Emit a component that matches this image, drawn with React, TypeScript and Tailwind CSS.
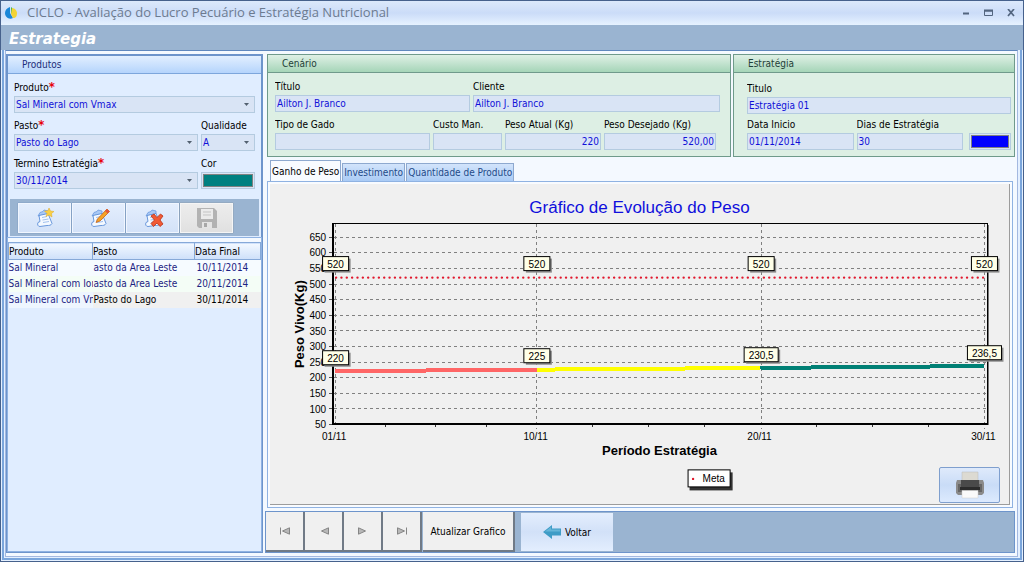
import React, { useState } from 'react';

interface Registro {
  id: number;
  produto: string;
  pasto: string;
  dataFinal: string;
}

interface Ponto {
  dia: number;
  peso: number;
  label: string;
}

const registros: Registro[] = [
  { id: 1, produto: 'Sal Mineral', pasto: 'asto da Area Leste', dataFinal: '10/11/2014' },
  { id: 2, produto: 'Sal Mineral com Ior', pasto: 'asto da Area Leste', dataFinal: '20/11/2014' },
  { id: 3, produto: 'Sal Mineral com Vm', pasto: 'Pasto do Lago', dataFinal: '30/11/2014' },
];

const pontos: Ponto[] = [
  { dia: 1, peso: 220, label: '220' },
  { dia: 10, peso: 225, label: '225' },
  { dia: 20, peso: 230.5, label: '230,5' },
  { dia: 30, peso: 236.5, label: '236,5' },
];

const cores = ['#ff6666', '#ffff00', '#008075'];
const meta = 520;
const abas = ['Ganho de Peso', 'Investimento', 'Quantidade de Produto'];

const inputClass = 'block h-[17px] w-full min-w-0 border border-[#b4cbe0] bg-[#d9e4f5] px-px text-[#1010d8] outline-none';
const headerClass = 'flex h-[18px] items-center border-b px-3.5';

const Campo: React.FC<{ id: string; label: string; value?: string; right?: boolean }> = ({ id, label, value = '', right }) => (
  <div className="min-w-0">
    <label htmlFor={id} className="block h-4 truncate leading-4">{label}</label>
    <input id={id} defaultValue={value} className={`${inputClass} ${right ? 'text-right' : ''}`} />
  </div>
);

const Combo: React.FC<{ id: string; label: string; value: string; required?: boolean }> = ({ id, label, value, required }) => (
  <div className="min-w-0">
    <label htmlFor={id} className="block h-4 whitespace-nowrap leading-4">
      {label}
      {required && <span className="text-[13px] font-bold leading-none text-red-600">*</span>}
    </label>
    <div className="relative">
      <select id={id} className={`${inputClass} appearance-none`}>
        <option>{value}</option>
      </select>
      <svg viewBox="0 0 5 3" className="pointer-events-none absolute right-1.5 top-[7px] h-[3px] w-[5px]">
        <path d="M0 0h5L2.5 3z" fill="#52606f" />
      </svg>
    </div>
  </div>
);

const Cor: React.FC<{ id: string; value: string; label: string }> = ({ id, value, label }) => (
  <input
    id={id}
    type="color"
    aria-label={label}
    defaultValue={value}
    className="block h-[17px] w-full appearance-none border border-[#b4cbe0] bg-[#d9e4f5] p-px [&::-webkit-color-swatch-wrapper]:p-0 [&::-webkit-color-swatch]:rounded-none [&::-webkit-color-swatch]:border-[#808080]"
  />
);

// Folha de papel usada nos botões novo / editar / excluir
const Folha: React.FC<{ children?: React.ReactNode }> = ({ children }) => (
  <svg viewBox="0 0 22 20" className="h-5 w-[22px]">
    <path d="M4 8l2-3.500 3-1 1-1.500 4 1 0 3z" fill="#a9c9f5" stroke="#6c9be0" strokeWidth=".8" />
    <path d="M5 7.500l9-2 4 10c-1 2-3 2-5 2l-7 1c-2 0-3-2-2-4l2-1z" fill="#f4f9ff" stroke="#5c8fd8" strokeWidth=".9" />
    <path d="M8 9.500l5-1M8.500 12l6-1M9 14.500l6-1" stroke="#8db3ea" strokeWidth=".8" />
    {children}
  </svg>
);

const Marca: React.FC<{ x: number; y: number; texto: string }> = ({ x, y, texto }) => {
  const w = texto.length > 3 ? 34 : 26;
  return (
    <g>
      <rect x={x - w / 2 + 2} y={y - 5} width={w} height={14} fill="#8c8c8c" />
      <rect x={x - w / 2} y={y - 7} width={w} height={14} fill="#ffffe8" stroke="#000" />
      <text x={x} y={y + 4} textAnchor="middle">{texto}</text>
    </g>
  );
};

const px = (dia: number) => 65 + (dia - 1) * 22.36;
const py = (peso: number) => 240 - (peso - 50) * 0.312;

const Grafico: React.FC = () => {
  const escala = Array.from({ length: 13 }, (_, i) => 50 + i * 50);
  const dias = [1, 10, 20, 30];
  const ticks = [3.25, 5.5, 7.75, 12.5, 15, 17.5, 22.5, 25, 27.5];

  return (
    <svg viewBox="0 0 738 320" className="block w-full font-['Liberation_Sans',sans-serif] text-[10px]">
      <text x="369" y="29" textAnchor="middle" fontSize="17" fill="#0f0fdc">Gráfico de Evolução do Peso</text>

      <g shapeRendering="crispEdges">
        {escala.map((v) => (
          <g key={v}>
            <line x1="64" x2="715" y1={Math.round(py(v)) + 0.5} y2={Math.round(py(v)) + 0.5} stroke="#808080" strokeDasharray="3 3" />
            <line x1="59" x2="63" y1={Math.round(py(v)) + 0.5} y2={Math.round(py(v)) + 0.5} stroke="#555" />
          </g>
        ))}
        {dias.map((d) => (
          <line key={d} x1={Math.round(px(d)) + 0.5} x2={Math.round(px(d)) + 0.5} y1="40" y2="245" stroke="#808080" strokeDasharray="3 3" />
        ))}
        {ticks.map((d) => (
          <line key={d} x1={px(d)} x2={px(d)} y1="241" y2="243" stroke="#333" />
        ))}
        <path d="M62 39.500H717" stroke="#000" />
        <path d="M63 39V241M62 240H718" stroke="#000" strokeWidth="2" />
        <path d="M716.500 39V241" stroke="#000" />
        <path d="M717.500 41V241" stroke="#777" />
      </g>

      {escala.map((v) => (
        <text key={v} x="56" y={py(v) + 4} textAnchor="end">{v}</text>
      ))}
      {dias.map((d) => (
        <text key={d} x={px(d) - 1} y="256" textAnchor="middle">{`${String(d).padStart(2, '0')}/11`}</text>
      ))}

      <line x1="66" x2="713" y1="93.500" y2="93.500" stroke="#e0182d" strokeWidth="2.400" strokeLinecap="round" strokeDasharray="0 5.340" />
      {cores.map((cor, i) => (
        <line
          key={cor}
          x1={px(pontos[i].dia)}
          y1={py(pontos[i].peso)}
          x2={px(pontos[i + 1].dia)}
          y2={py(pontos[i + 1].peso)}
          stroke={cor}
          strokeWidth="4"
          shapeRendering="crispEdges"
        />
      ))}

      {pontos.map((p) => (
        <g key={p.dia}>
          <Marca x={Math.round(px(p.dia)) + 0.5} y={Math.round(py(meta)) - 13.5} texto="520" />
          <Marca x={Math.round(px(p.dia)) + 0.5} y={Math.round(py(p.peso)) - 13.5} texto={p.label} />
        </g>
      ))}

      <text x="389" y="271" textAnchor="middle" fontSize="13" fontWeight="bold">Período Estratégia</text>
      <text transform="translate(34 140) rotate(-90)" textAnchor="middle" fontSize="13" fontWeight="bold">Peso Vivo(Kg)</text>

      <rect x="419" y="288" width="43" height="18" fill="#333" />
      <rect x="417.500" y="285.500" width="42" height="17" fill="#fff" stroke="#000" />
      <circle cx="422.500" cy="294.500" r="1.200" fill="#e0182d" />
      <text x="432" y="298">Meta</text>
    </svg>
  );
};

const toolButton = 'flex h-[30px] w-[53px] items-center justify-center border border-[#f0f6ff] bg-gradient-to-b from-[#e4eefd] to-[#d3e2f8] shadow-[0_0_1px_#5d7fae]';
const navButton = 'flex h-10 w-[39px] items-center justify-center border-b-2 border-r-2 border-[#707a86] bg-[#f0f0f0]';

const App: React.FC = () => {
  const [aba, setAba] = useState(abas[0]);

  return (
    <div className="flex min-h-screen flex-col border border-[#46618c] bg-[#e4f0ff] font-['DejaVu_Sans_Condensed','DejaVu_Sans',sans-serif] text-[10px] text-black">
      {/* Barra de título */}
      <header className="flex h-6 shrink-0 items-center justify-between bg-gradient-to-b from-[#dce9fb] via-[#cbdcf8] to-[#e6f2ff] px-1">
        <div className="flex items-center gap-2.5">
          <svg viewBox="0 0 12 12" className="h-3 w-3">
            <path d="M5 0v6l3 5C4 13 0 10 0 6c0-3 2-5 5-6z" fill="#1a86d8" />
            <path d="M6 0c2 1 2 3 2 5l-2 2z" fill="#35b558" />
            <path d="M7 1c3 0 5 3 5 5 0 3-1 5-4 5L6 7z" fill="#f3d335" />
          </svg>
          <h1 className="whitespace-nowrap font-['Open_Sans','Noto_Sans',sans-serif] text-[13px] text-[#6c7b90]">
            CICLO - Avaliação do Lucro Pecuário e Estratégia Nutricional
          </h1>
        </div>
        <div className="flex items-center gap-3.5 pr-1 text-[#52657f]">
          <button aria-label="Minimizar">
            <svg viewBox="0 0 8 8" className="h-2 w-2"><path d="M1 4.500h6" stroke="currentColor" strokeWidth="2" /></svg>
          </button>
          <button aria-label="Maximizar">
            <svg viewBox="0 0 9 8" className="h-2 w-[9px]"><path d="M.5 1.500h8v5h-8zM0 2h9" fill="none" stroke="currentColor" strokeWidth="1" /><path d="M0 1.500h9" stroke="currentColor" strokeWidth="2" /></svg>
          </button>
          <button aria-label="Fechar">
            <svg viewBox="0 0 8 8" className="h-2 w-2"><path d="M1 0l6 7M7 0L1 7" stroke="currentColor" strokeWidth="1.700" /></svg>
          </button>
        </div>
      </header>
      <div className="flex h-[25px] shrink-0 items-center bg-[#9ab4d1] px-2 pt-1">
        <h2 className="font-['DejaVu_Sans',sans-serif] text-[15px] font-bold italic text-white">Estrategia</h2>
      </div>

      <div className="flex flex-1 flex-col px-px pb-px">
        <div className="flex flex-1 flex-col border-x-2 border-b-2 border-[#7ba6dc] pb-px pl-px pr-0.5">
          <main className="flex flex-1 gap-0.5 border border-t-[#6088be] border-x-[#a3b8e0] border-b-[#a3b8e0] bg-[#f4f9ff] pb-[3px] pr-0.5 pt-[3px]">
            {/* Coluna de produtos */}
            <aside className="flex w-[257px] shrink-0 flex-col border-2 border-[#6d94cb] bg-[#e0edff]">
              <h3 className={`${headerClass} border-[#7da6dc] bg-gradient-to-b from-[#e2efff] to-[#b5d4fc] text-[#1b2e7a]`}>Produtos</h3>
              <form className="flex flex-col gap-[5px] px-1.5 pt-1.5">
                <Combo id="produto" label="Produto" value="Sal Mineral com Vmax" required />
                <div className="grid grid-cols-[184fr_54fr] gap-[3px]">
                  <Combo id="pasto" label="Pasto" value="Pasto do Lago" required />
                  <Combo id="qualidade" label="Qualidade" value="A" />
                </div>
                <div className="grid grid-cols-[184fr_54fr] gap-[3px]">
                  <Combo id="termino" label="Termino Estratégia" value="30/11/2014" required />
                  <div>
                    <label htmlFor="cor" className="block h-4 leading-4">Cor</label>
                    <Cor id="cor" label="Cor" value="#008080" />
                  </div>
                </div>
              </form>
              <div className="mx-0.5 mb-0.5 mt-2.5 flex h-[37px] items-center gap-px bg-[#9ab4d1] px-2">
                <button className={toolButton} aria-label="Novo">
                  <Folha><path d="M15 0l1.500 3 3.500.5-2.500 2 .5 3.500-3-2-3 1.500 1-3-2.500-2.500 3.500-.3z" fill="#f9d046" stroke="#e0a820" strokeWidth=".5" /></Folha>
                </button>
                <button className={toolButton} aria-label="Editar">
                  <Folha><path d="M19 1l2.500 2.500L12 13l-4 1.500L9.500 11z" fill="#f6a325" stroke="#c4651b" strokeWidth=".8" /><path d="M19 1l2.500 2.500-2 2L17 3z" fill="#e2553d" /></Folha>
                </button>
                <button className={toolButton} aria-label="Excluir">
                  <Folha><path d="M9 8l3-2 3 3.500L18.500 6 21 8l-3 4 3 4-3 2.500-3-3.500-3.500 3.500-2.500-3 3.500-3.500z" fill="#f15a35" stroke="#b93115" strokeWidth=".8" /></Folha>
                </button>
                <button className={`${toolButton} grayscale`} aria-label="Salvar" disabled>
                  <svg viewBox="0 0 22 20" className="h-5 w-[22px] opacity-80">
                    <path d="M1 0h17l3 3v17H3l-2-2z" fill="#a6a6a6" />
                    <path d="M5 1h12v10H5z" fill="#ececec" />
                    <path d="M7 4h8M7 7h8" stroke="#bbb" />
                    <path d="M6 14h10v6H6z" fill="#e4e4e4" />
                    <path d="M8 15h3v4H8z" fill="#999" />
                  </svg>
                </button>
              </div>
              <div className="flex flex-1 flex-col border-t-4 border-[#f4f9ff] outline-1 outline-[#8fb2e2]">
                <table className="w-full table-fixed border-collapse text-left">
                  <colgroup>
                    <col className="w-[84px]" />
                    <col className="w-[102px]" />
                    <col />
                  </colgroup>
                  <thead>
                    <tr className="h-[17px] border border-[#86a9d8] bg-gradient-to-b from-[#f2f8ff] to-[#cfe1fa]">
                      <th className="border-r border-[#86a9d8] p-0 font-normal">Produto</th>
                      <th className="border-r border-[#86a9d8] p-0 font-normal">Pasto</th>
                      <th className="p-0 font-normal">Data Final</th>
                    </tr>
                  </thead>
                  <tbody className="text-[#1c2382]">
                    {registros.map((r) => (
                      <tr key={r.id} className="h-4 bg-[#f6fbff] even:bg-[#f4fdf6] last:bg-[#f0f0f0]">
                        <td className={`overflow-hidden whitespace-nowrap p-0 ${r.id === 3 ? 'bg-[#eef6ff]' : ''}`}>{r.produto}</td>
                        <td className={`overflow-hidden whitespace-nowrap p-0 pl-px ${r.id === 3 ? 'text-black' : ''}`}>{r.pasto}</td>
                        <td className={`whitespace-nowrap p-0 pl-0.5 ${r.id === 3 ? 'text-black' : ''}`}>{r.dataFinal}</td>
                      </tr>
                    ))}
                  </tbody>
                </table>
              </div>
            </aside>

            <div className="flex min-w-0 flex-1 flex-col">
              <div className="grid grid-cols-[464fr_282fr] gap-0.5 pl-0.5">
                <section className="h-[103px] border border-[#6f9a8b] bg-[#ddefe4]">
                  <h3 className={`${headerClass} border-[#6f9a8b] bg-gradient-to-b from-[#dff0e6] to-[#a5d5b8] text-[#1f3f38]`}>Cenário</h3>
                  <div className="flex flex-col gap-[5px] pl-[7px] pr-2.5 pt-1.5">
                    <div className="grid grid-cols-[195fr_247fr] gap-[3px]">
                      <Campo id="titulo" label="Título" value="Ailton J. Branco" />
                      <Campo id="cliente" label="Cliente" value="Ailton J. Branco" />
                    </div>
                    <div className="grid grid-cols-[155fr_69fr_96fr_112fr] gap-[3px] pr-1">
                      <Campo id="tipo" label="Tipo de Gado" />
                      <Campo id="custo" label="Custo Man." />
                      <Campo id="atual" label="Peso Atual (Kg)" value="220" right />
                      <Campo id="desejado" label="Peso Desejado (Kg)" value="520,00" right />
                    </div>
                  </div>
                </section>
                <section className="h-[103px] border border-[#6f9a8b] bg-[#ddefe4]">
                  <h3 className={`${headerClass} border-[#6f9a8b] bg-gradient-to-b from-[#dff0e6] to-[#a5d5b8] text-[#1f3f38]`}>Estratégia</h3>
                  <div className="flex flex-col gap-[3px] pl-[13px] pr-[3px] pt-2">
                    <Campo id="titulo-estrategia" label="Titulo" value="Estratégia 01" />
                    <div className="grid grid-cols-[107fr_107fr_45fr] items-end gap-[3px]">
                      <Campo id="inicio" label="Data Inicio" value="01/11/2014" />
                      <Campo id="dias" label="Dias de Estratégia" value="30" />
                      <div className="pl-[3px]">
                        <Cor id="cor-estrategia" label="Cor da estratégia" value="#0000ff" />
                      </div>
                    </div>
                  </div>
                </section>
              </div>

              {/* Abas */}
              <div className="flex items-end gap-px pl-[5px] pt-[3px]" role="tablist">
                {abas.map((nome) => (
                  <button
                    key={nome}
                    role="tab"
                    aria-selected={aba === nome}
                    onClick={() => setAba(nome)}
                    className={`whitespace-nowrap border border-b-0 border-[#8ea9cf] px-px ${aba === nome ? 'h-[21px] bg-[#f8fbff]' : 'h-[18px] bg-gradient-to-b from-[#d3e4fb] to-[#a9cbf5] text-[#1e4a88]'}`}
                  >
                    {nome}
                  </button>
                ))}
              </div>
              <div className="relative ml-0.5 mr-0.5 flex-1 border border-[#8fb2e2] bg-[#f8fbff] p-0.5">
                <div className="h-full border-b border-r border-[#9c9c9c] bg-[#f0f0f0]">
                  <Grafico />
                </div>
                <button aria-label="Imprimir" className="absolute bottom-1 right-3 flex h-9 w-[61px] items-center justify-center rounded-xs border border-[#7f9fce] bg-gradient-to-b from-[#dfeafb] via-[#c9dcf7] to-[#dceafe]">
                  <svg viewBox="0 0 28 28" className="h-7 w-7">
                    <path d="M6 1h16v9H6z" fill="#dcdad2" stroke="#bbb" strokeWidth=".5" />
                    <path d="M1 9h26l1 3v10l-2 2H2l-2-2V12z" fill="#8a8a8a" />
                    <path d="M2 13h24v8H2z" fill="#666" />
                    <path d="M5 9h18v7H5z" fill="#4a4a4a" />
                    <path d="M4 16h20v3H4z" fill="#2c2c2c" />
                    <path d="M6 19.500h16V27H6z" fill="#fafafa" stroke="#ccc" strokeWidth=".5" />
                  </svg>
                </button>
              </div>

              {/* Barra de navegação */}
              <nav className="mt-[3px] flex h-[42px] shrink-0 items-center border border-[#6d94cb] bg-[#9ab4d1]">
                {['primeiro', 'anterior', 'próximo', 'último'].map((nome, i) => (
                  <button key={nome} aria-label={nome} className={navButton}>
                    <svg viewBox="0 0 12 8" className="h-2 w-3" fill="#b8b8b8" stroke="#858585">
                      {i < 2 ? <path d="M10.500 .8v6.400L3.500 4z" /> : <path d="M1.500 .8v6.400L8.500 4z" />}
                      {i === 0 && <path d="M1.500 .5v7" />}
                      {i === 3 && <path d="M10.500 .5v7" />}
                    </svg>
                  </button>
                ))}
                <button className="ml-px h-10 w-[92px] border-b-2 border-r-2 border-[#707a86] bg-[#f0f0f0]">Atualizar Grafico</button>
                <button className="ml-1.5 flex h-[38px] w-[92px] items-center justify-center gap-1 bg-gradient-to-b from-[#e4eefd] via-[#d2e1f8] to-[#e3eefe]">
                  <svg viewBox="0 0 18 14" className="h-3.5 w-[18px]">
                    <path d="M0 7L9 0v3.500h9v7H9V14z" fill="#3f9cc6" />
                    <path d="M2 6.500L8 2v2.500h9v2z" fill="#66b5d8" />
                  </svg>
                  Voltar
                </button>
              </nav>
            </div>
          </main>
        </div>
      </div>
    </div>
  );
};

export default App;
